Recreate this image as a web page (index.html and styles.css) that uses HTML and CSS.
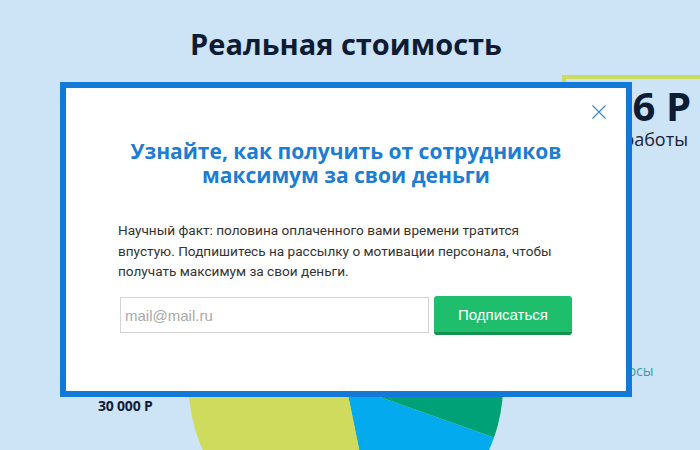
FILE: index.html
```html
<!DOCTYPE html>
<html lang="ru">
<head>
<meta charset="utf-8">
<title>Реальная стоимость</title>
<link rel="stylesheet" href="styles.css">
</head>
<body>
<div class="page">
  <header class="header">
    <h1 class="title">Реальная стоимость</h1>
  </header>
  <section class="stats">
    <div class="stat-card">
      <div class="stat-value">123 456 Р</div>
      <div class="stat-label">стоимость работы</div>
    </div>
  </section>
  <section class="chart">
    <div class="legend-left">
      <div class="legend-value">30 000 Р</div>
    </div>
    <svg class="pie" width="314" height="314" viewBox="0 0 314 314">
      <circle cx="157" cy="157" r="157" fill="#cfdb5c"/>
      <path d="M157 157 L305.0 104.4 A157 157 0 0 1 305.0 209.4 Z" fill="#00a176"/>
      <path d="M157 157 L305.0 209.4 A157 157 0 0 1 188.6 311.4 Z" fill="#03abee"/>
      <path d="M157 157 L188.6 311.4 A157 157 0 0 1 0 157 L0 0 Z" fill="#cfdb5c"/>
    </svg>
    <div class="legend-right">
      <div class="legend-item">Взносы</div>
    </div>
  </section>

  <div class="modal">
    <button class="modal-close" type="button" aria-label="Закрыть">
      <svg width="14" height="14" viewBox="0 0 14 14"><path d="M0.5 0.5 L13.5 13.5 M13.5 0.5 L0.5 13.5" stroke="#3d8bd3" stroke-width="1.3" fill="none"/></svg>
    </button>
    <div class="modal-body">
      <h2 class="modal-title">Узнайте, как получить от сотрудников<br>максимум за свои деньги</h2>
      <p class="modal-text">Научный факт: половина оплаченного вами времени тратится<br>впустую. Подпишитесь на рассылку о мотивации персонала, чтобы<br>получать максимум за свои деньги.</p>
      <form class="subscribe">
        <input class="subscribe-input" type="text" placeholder="mail@mail.ru">
        <button class="subscribe-btn" type="button">Подписаться</button>
      </form>
    </div>
  </div>
</div>
</body>
</html>
```

FILE: styles.css
```css
html, body {
  margin: 0;
  padding: 0;
}
body {
  background: #cde3f6;
  overflow: hidden;
  width: 700px;
  height: 450px;
}
.page {
  position: relative;
  width: 700px;
  height: 450px;
  overflow: hidden;
}
.header {
  width: 692px;
  height: 75px;
  box-sizing: border-box;
  padding-top: 24px;
}
.title {
  margin: 0;
  text-align: center;
  font-family: "Open Sans", sans-serif;
  font-weight: 700;
  font-size: 29px;
  line-height: 40px;
  color: #0e1c33;
  letter-spacing: 0;
}
.stats {
  height: 153px;
  display: flex;
  justify-content: flex-end;
}
.stat-card {
  width: 122px;
  border-top: 4px solid #cfdb5c;
  border-left: 4px solid #cfdb5c;
  text-align: right;
  padding-right: 12px;
  white-space: nowrap;
  display: flex;
  flex-direction: column;
  align-items: flex-end;
}
.stat-value {
  font-family: "Open Sans", sans-serif;
  font-weight: 700;
  font-size: 40px;
  line-height: 44px;
  margin-top: 5px;
  margin-right: -3px;
  color: #0e1c33;
}
.stat-label {
  font-family: "Open Sans", sans-serif;
  font-size: 18px;
  line-height: 22px;
  color: #1a2233;
}
.chart {
  display: flex;
  align-items: flex-start;
}
.legend-left {
  width: 91px;
  padding-left: 98px;
  padding-top: 168px;
}
.legend-value {
  font-family: "Open Sans", sans-serif;
  font-weight: 700;
  font-size: 14px;
  color: #0e1c33;
  white-space: nowrap;
  letter-spacing: -0.2px;
}
.pie {
  display: block;
  flex: none;
}
.legend-right {
  padding-left: 100px;
  padding-top: 133px;
}
.legend-item {
  font-family: "Open Sans", sans-serif;
  font-size: 14px;
  color: #3a9fa3;
  white-space: nowrap;
}
.modal {
  position: absolute;
  left: 60px;
  top: 82px;
  width: 560px;
  height: 303px;
  border: 6px solid #1379d9;
  background: #fff;
}
.modal-close {
  position: absolute;
  right: 20px;
  top: 17px;
  width: 14px;
  height: 14px;
  padding: 0;
  border: 0;
  background: none;
}
.modal-close svg {
  display: block;
}
.modal-body {
  width: 456px;
  margin: 0 auto;
  padding-top: 51px;
}
.modal-title {
  margin: 0;
  text-align: center;
  font-family: "Open Sans", sans-serif;
  font-weight: 700;
  font-size: 21px;
  line-height: 24px;
  color: #1b7dd3;
  white-space: nowrap;
}
.modal-text {
  margin: 33px 0 0;
  font-family: Roboto, sans-serif;
  font-size: 13.6px;
  line-height: 20.5px;
  color: #333;
  white-space: nowrap;
}
.subscribe {
  display: flex;
  align-items: center;
  gap: 5px;
  margin-top: 14px;
  padding-left: 2px;
}
.subscribe-input {
  width: 309px;
  height: 36px;
  box-sizing: border-box;
  border: 1px solid #d3d3d3;
  padding: 0 4px;
  font-family: "Liberation Sans", sans-serif;
  font-size: 15px;
  color: #333;
  outline: none;
}
.subscribe-input::placeholder {
  color: #a9a9a9;
}
.subscribe-btn {
  width: 138px;
  height: 39px;
  box-sizing: border-box;
  border: 0;
  border-bottom: 3px solid #14904f;
  border-radius: 3px;
  background: #1fbe6d;
  color: #fff;
  font-family: "Liberation Sans", sans-serif;
  font-size: 15px;
  padding: 2px 0 0;
}
```
